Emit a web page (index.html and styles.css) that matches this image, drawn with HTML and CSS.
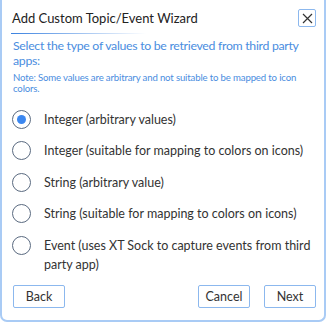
FILE: index.html
```html
<!DOCTYPE html>
<html lang="en">
<head>
  <meta charset="UTF-8" />
  <title>Add Custom Topic/Event Wizard</title>
  <link rel="stylesheet" href="styles.css">
</head>
<body>
  <div class="dialog">
    <div class="titlebar">
      <h1>Add Custom Topic/Event Wizard</h1>
      <button class="close" aria-label="Close">
        <svg width="11" height="11" viewBox="0 0 11 11"><path d="M1 1 L10 10 M10 1 L1 10" stroke="#333" stroke-width="1.2" fill="none"/></svg>
      </button>
    </div>
    <div class="rule"></div>
    <p class="intro">Select the type of values to be retrieved from third party apps:</p>
    <p class="note">Note: Some values are arbitrary and not suitable to be mapped to icon colors.</p>

    <ul class="options">
      <li><span class="radio checked"></span><span>Integer (arbitrary values)</span></li>
      <li><span class="radio"></span><span>Integer (suitable for mapping to colors on icons)</span></li>
      <li><span class="radio"></span><span>String (arbitrary value)</span></li>
      <li><span class="radio"></span><span>String (suitable for mapping to colors on icons)</span></li>
      <li><span class="radio"></span><span>Event (uses XT Sock to capture events from third party app)</span></li>
    </ul>

    <div class="actions">
      <button class="btn">Back</button>
      <span class="spacer"></span>
      <button class="btn">Cancel</button>
      <button class="btn">Next</button>
    </div>
  </div>
</body>
</html>
```

FILE: styles.css
```css
body {
  margin: 0;
  background: #fff;
  font-family: 'Lato', sans-serif;
  color: #333;
}
.dialog {
  width: 326px;
  height: 322px;
  box-sizing: border-box;
  border: 2px solid #a9cbf5;
  border-top: none;
  border-radius: 0 0 7px 7px;
  padding: 0 8px 0 9px;
  background: #fff;
}
.titlebar {
  display: flex;
  align-items: center;
  justify-content: space-between;
  padding-top: 8px;
  height: 20px;
}
h1 {
  margin: 0 0 0 1px;
  font-size: 13px;
  line-height: 20px;
  font-weight: normal;
  color: #222;
}
.close {
  width: 18px;
  height: 18px;
  padding: 0;
  border: 1px solid #8cb8ee;
  border-radius: 2px;
  background: #fff;
  display: flex;
  align-items: center;
  justify-content: center;
}
.rule {
  margin-top: 5px;
  height: 1px;
  width: 135px;
  background: linear-gradient(to right, #3b82e0, rgba(59,130,224,0));
}
.intro {
  margin: 3.5px 0 0 2px;
  font-size: 12.3px;
  letter-spacing: -0.3px;
  line-height: 15px;
  color: #4a8de0;
}
.note {
  margin: 4px 0 0 2px;
  font-size: 9.6px;
  letter-spacing: -0.15px;
  line-height: 11px;
  color: #4a8de0;
}
.options {
  list-style: none;
  margin: 16px 0 0;
  padding: 0;
}
.options li {
  display: flex;
  align-items: flex-start;
  font-size: 12.5px;
  line-height: 19px;
  margin-bottom: 12.5px;
}
.radio {
  flex: none;
  width: 19px;
  height: 19px;
  box-sizing: border-box;
  border: 1px solid #5a6a80;
  border-radius: 50%;
  margin: 0 13px 0 1px;
  position: relative;
}
.radio.checked::after {
  content: "";
  position: absolute;
  left: 4px;
  top: 4px;
  width: 9px;
  height: 9px;
  border-radius: 50%;
  background: #3b87f0;
}
.actions {
  display: flex;
  gap: 14px;
  padding-left: 2px;
  margin-top: -1px;
}
.spacer {
  flex: 1;
}
.btn {
  width: 52px;
  height: 23px;
  border: 1px solid #8cb8ee;
  border-radius: 2px;
  background: #fff;
  font-family: 'Lato', sans-serif;
  font-size: 12.5px;
  color: #333;
  padding: 0;
}
```
